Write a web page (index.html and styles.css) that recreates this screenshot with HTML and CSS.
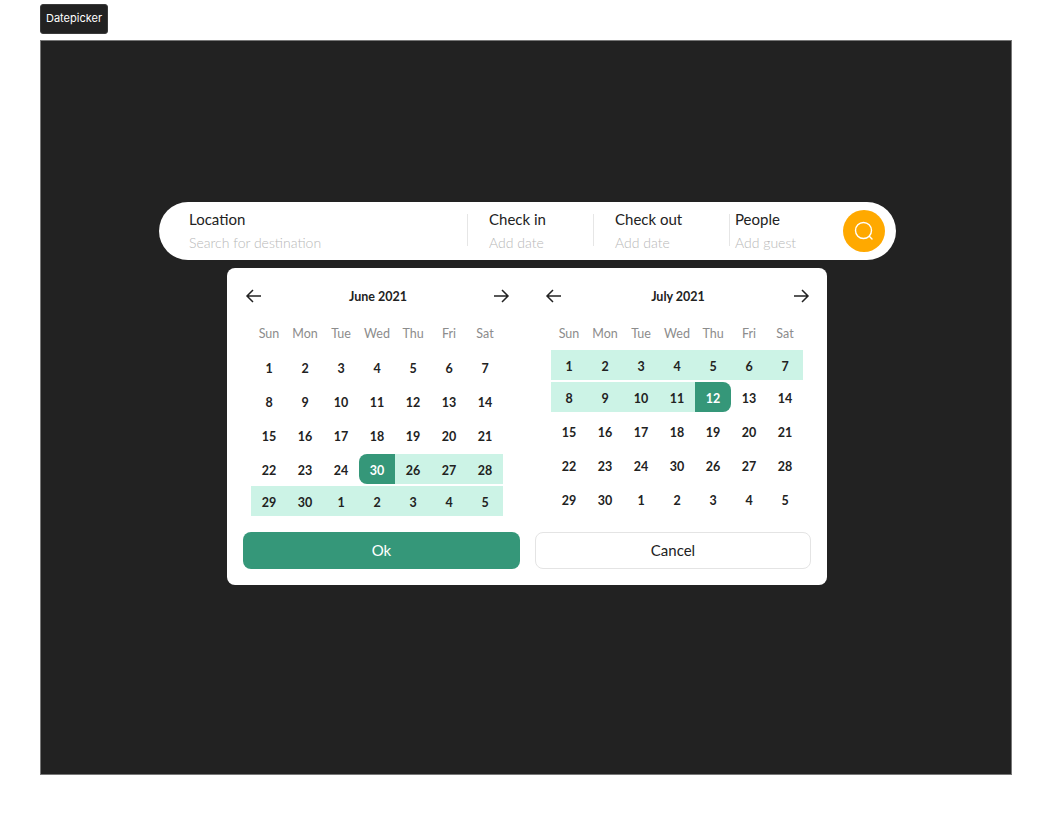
FILE: index.html
```html
<!DOCTYPE html>
<html lang="en">
<head>
  <meta charset="UTF-8" />
  <title>Datepicker</title>
  <link rel="stylesheet" href="styles.css">
</head>
<body>
  <div class="tag">Datepicker</div>
  <div class="frame">
    <div class="searchbar">
      <div class="field field-location"><b>Location</b><span>Search for destination</span></div>
      <div class="divider"></div>
      <div class="field field-checkin"><b>Check in</b><span>Add date</span></div>
      <div class="divider"></div>
      <div class="field field-checkout"><b>Check out</b><span>Add date</span></div>
      <div class="divider"></div>
      <div class="field field-people"><b>People</b><span>Add guest</span></div>
      <button class="search-btn" type="button" aria-label="Search">
        <svg width="22" height="22" viewBox="0 0 22 22" fill="none" stroke="#fff" stroke-width="1.4" stroke-linecap="round"><circle cx="10.5" cy="10.5" r="8"/><path d="M16.3 16.3 19 19"/></svg>
      </button>
    </div>

    <div class="popup">
      <div class="months">
        <div class="month month-june">
          <div class="month-head">
            <svg class="arrow" width="20" height="20" viewBox="0 0 20 20" fill="none" stroke="#222" stroke-width="1.5"><path d="M18 10H4M10 4l-6 6 6 6"/></svg>
            <h3>June 2021</h3>
            <svg class="arrow" width="20" height="20" viewBox="0 0 20 20" fill="none" stroke="#222" stroke-width="1.5"><path d="M3 10h14M11 4l6 6-6 6"/></svg>
          </div>
          <div class="week days"><span>Sun</span><span>Mon</span><span>Tue</span><span>Wed</span><span>Thu</span><span>Fri</span><span>Sat</span></div>
          <div class="week"><span>1</span><span>2</span><span>3</span><span>4</span><span>5</span><span>6</span><span>7</span></div>
          <div class="week"><span>8</span><span>9</span><span>10</span><span>11</span><span>12</span><span>13</span><span>14</span></div>
          <div class="week"><span>15</span><span>16</span><span>17</span><span>18</span><span>19</span><span>20</span><span>21</span></div>
          <div class="week"><span>22</span><span>23</span><span>24</span><span class="start">30</span><span class="in-range">26</span><span class="in-range">27</span><span class="in-range">28</span></div>
          <div class="week week-tight"><span class="in-range">29</span><span class="in-range">30</span><span class="in-range">1</span><span class="in-range">2</span><span class="in-range">3</span><span class="in-range">4</span><span class="in-range">5</span></div>
        </div>

        <div class="month month-july">
          <div class="month-head">
            <svg class="arrow" width="20" height="20" viewBox="0 0 20 20" fill="none" stroke="#222" stroke-width="1.5"><path d="M18 10H4M10 4l-6 6 6 6"/></svg>
            <h3>July 2021</h3>
            <svg class="arrow" width="20" height="20" viewBox="0 0 20 20" fill="none" stroke="#222" stroke-width="1.5"><path d="M3 10h14M11 4l6 6-6 6"/></svg>
          </div>
          <div class="week days"><span>Sun</span><span>Mon</span><span>Tue</span><span>Wed</span><span>Thu</span><span>Fri</span><span>Sat</span></div>
          <div class="week"><span class="in-range">1</span><span class="in-range">2</span><span class="in-range">3</span><span class="in-range">4</span><span class="in-range">5</span><span class="in-range">6</span><span class="in-range">7</span></div>
          <div class="week week-tight"><span class="in-range">8</span><span class="in-range">9</span><span class="in-range">10</span><span class="in-range">11</span><span class="end">12</span><span>13</span><span>14</span></div>
          <div class="week"><span>15</span><span>16</span><span>17</span><span>18</span><span>19</span><span>20</span><span>21</span></div>
          <div class="week"><span>22</span><span>23</span><span>24</span><span>30</span><span>26</span><span>27</span><span>28</span></div>
          <div class="week"><span>29</span><span>30</span><span>1</span><span>2</span><span>3</span><span>4</span><span>5</span></div>
        </div>
      </div>

      <div class="actions">
        <button class="btn btn-ok" type="button">Ok</button>
        <button class="btn btn-cancel" type="button">Cancel</button>
      </div>
    </div>
  </div>
</body>
</html>
```

FILE: styles.css
```css
body {
  margin: 0;
  padding: 4px 40px 0;
  background: #fff;
  font-family: 'Lato', sans-serif;
}
.tag {
  width: 68px;
  height: 30px;
  box-sizing: border-box;
  background: #222;
  border: 1px solid #3a3a3a;
  border-radius: 3px;
  color: #fff;
  font-family: 'Inter', sans-serif;
  font-size: 11px;
  line-height: 26px;
  text-align: center;
}
.frame {
  width: 972px;
  height: 735px;
  box-sizing: border-box;
  margin-top: 6px;
  padding-top: 161px;
  background: #222;
  border: 1px solid #777;
}
.searchbar {
  display: flex;
  align-items: center;
  width: 737px;
  height: 58px;
  box-sizing: border-box;
  margin-left: 118px;
  padding-left: 30px;
  background: #fff;
  border-radius: 29px;
}
.field {
  display: flex;
  flex-direction: column;
  justify-content: space-between;
  flex: none;
  height: 40px;
}
.field b {
  font-weight: 400;
  font-size: 15px;
  line-height: 16px;
  color: #222;
}
.field span {
  font-size: 14px;
  font-weight: 300;
  line-height: 16px;
  color: #b8b8b8;
  white-space: nowrap;
}
.divider {
  flex: none;
  width: 1px;
  height: 32px;
  margin-top: -2px;
  background: #e6e6e6;
}
.field-location { width: 278px; }
.field-checkin { width: 104px; padding-left: 21px; }
.field-checkout { width: 114px; padding-left: 21px; }
.field-people { width: 86px; padding-left: 5px; }
.search-btn {
  display: flex;
  align-items: center;
  justify-content: center;
  width: 42px;
  height: 42px;
  margin-left: 22px;
  padding: 0;
  background: #ffa900;
  border: none;
  border-radius: 50%;
}
.popup {
  width: 600px;
  height: 317px;
  box-sizing: border-box;
  margin: 8px 0 0 186px;
  padding: 16px;
  background: #fff;
  border-radius: 8px;
}
.months {
  display: flex;
  justify-content: space-between;
  height: 232px;
}
.month {
  width: 268px;
}
.month-head {
  display: flex;
  align-items: center;
  justify-content: space-between;
  height: 24px;
}
.month-head h3 {
  margin: 0 0 0 2px;
  font-size: 12.5px;
  font-weight: 700;
  color: #222;
}
.arrow {
  flex: none;
}
.week {
  display: grid;
  grid-template-columns: repeat(7, 36px);
  margin: 4px 8px 0;
}
.week span {
  height: 30px;
  font-size: 12.5px;
  font-weight: 700;
  line-height: 33px;
  text-align: center;
  color: #222;
}
.week-tight {
  margin-top: 2px;
}
.days {
  margin-top: 16px;
  margin-bottom: 6px;
}
.days span {
  height: 20px;
  line-height: 20px;
  font-weight: 400;
  color: #8c8c8c;
}
.month-june .days {
  margin-bottom: 8px;
}
.in-range {
  background: #ccf3e6;
}
.week .start {
  background: #359779;
  border-radius: 8px 0 0 8px;
  color: #fff;
}
.week .end {
  background: #359779;
  border-radius: 0 8px 8px 0;
  color: #fff;
}
.actions {
  display: flex;
  justify-content: space-between;
  margin-top: 16px;
}
.btn {
  width: 277px;
  height: 37px;
  box-sizing: border-box;
  padding-bottom: 3px;
  border-radius: 8px;
  font-family: 'Lato', sans-serif;
  font-size: 15px;
}
.btn-ok {
  background: #359779;
  border: none;
  color: #fff;
}
.btn-cancel {
  width: 276px;
  background: #fff;
  border: 1px solid #e4e4e4;
  color: #222;
}
```
